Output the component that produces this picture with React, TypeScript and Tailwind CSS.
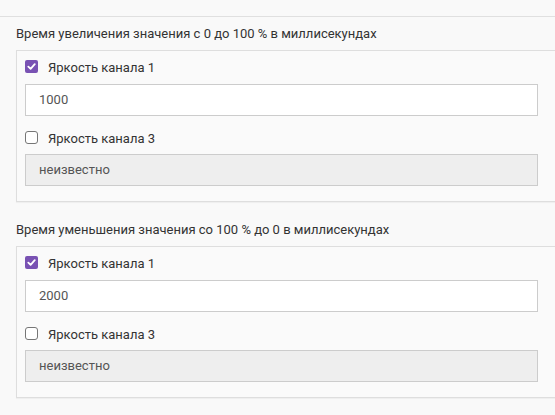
import React from 'react';

const CheckRow = ({ checked, label }: { checked: boolean; label: string }) => (
  <label className="flex items-center h-[20px]">
    {checked ? (
      <span className="w-[13px] h-[13px] rounded-[2px] bg-[#7952b3] flex items-center justify-center">
        <svg width="9" height="9" viewBox="0 0 10 10">
          <path d="M1.5 5.2 L4 7.6 L8.6 2.4" stroke="white" strokeWidth="2" fill="none" strokeLinecap="round" strokeLinejoin="round" />
        </svg>
      </span>
    ) : (
      <span className="w-[13px] h-[13px] rounded-[3px] border border-[#767676] bg-white" />
    )}
    <span className="ml-[10px] mt-[3px] text-[13px] text-[#333]">{label}</span>
  </label>
);

const Section = ({ title, value }: { title: string; value: string }) => (
  <div>
    <div className="h-[33px] flex items-center pl-[16px] text-[13px] text-[#333]">{title}</div>
    <div className="ml-[16px] border-t border-l border-b border-[#dedede] bg-[#fafafa] pl-[8px] pt-[5px] pb-[15px] shadow-[0_1px_1px_rgba(0,0,0,0.04)]">
      <CheckRow checked label="Яркость канала 1" />
      <div className="mt-[8px] w-[513px] h-[32px] border border-[#ccc] bg-white flex items-center px-[13px] text-[13px] text-[#555]">
        {value}
      </div>
      <div className="mt-[11px]">
        <CheckRow checked={false} label="Яркость канала 3" />
      </div>
      <div className="mt-[7px] w-[513px] h-[32px] border border-[#ccc] bg-[#eeeeee] flex items-center px-[13px] text-[13px] text-[#555]">
        неизвестно
      </div>
    </div>
  </div>
);

export default function App() {
  return (
    <div className="w-[555px] h-[415px] overflow-hidden bg-[#f9f9f9] font-['Roboto',sans-serif]">
      <div className="h-[16px]" />
      <div className="border-t border-[#e0e0e0]">
        <Section title="Время увеличения значения с 0 до 100 % в миллисекундах" value="1000" />
        <div className="mt-[11px]">
          <Section title="Время уменьшения значения со 100 % до 0 в миллисекундах" value="2000" />
        </div>
      </div>
    </div>
  );
}
